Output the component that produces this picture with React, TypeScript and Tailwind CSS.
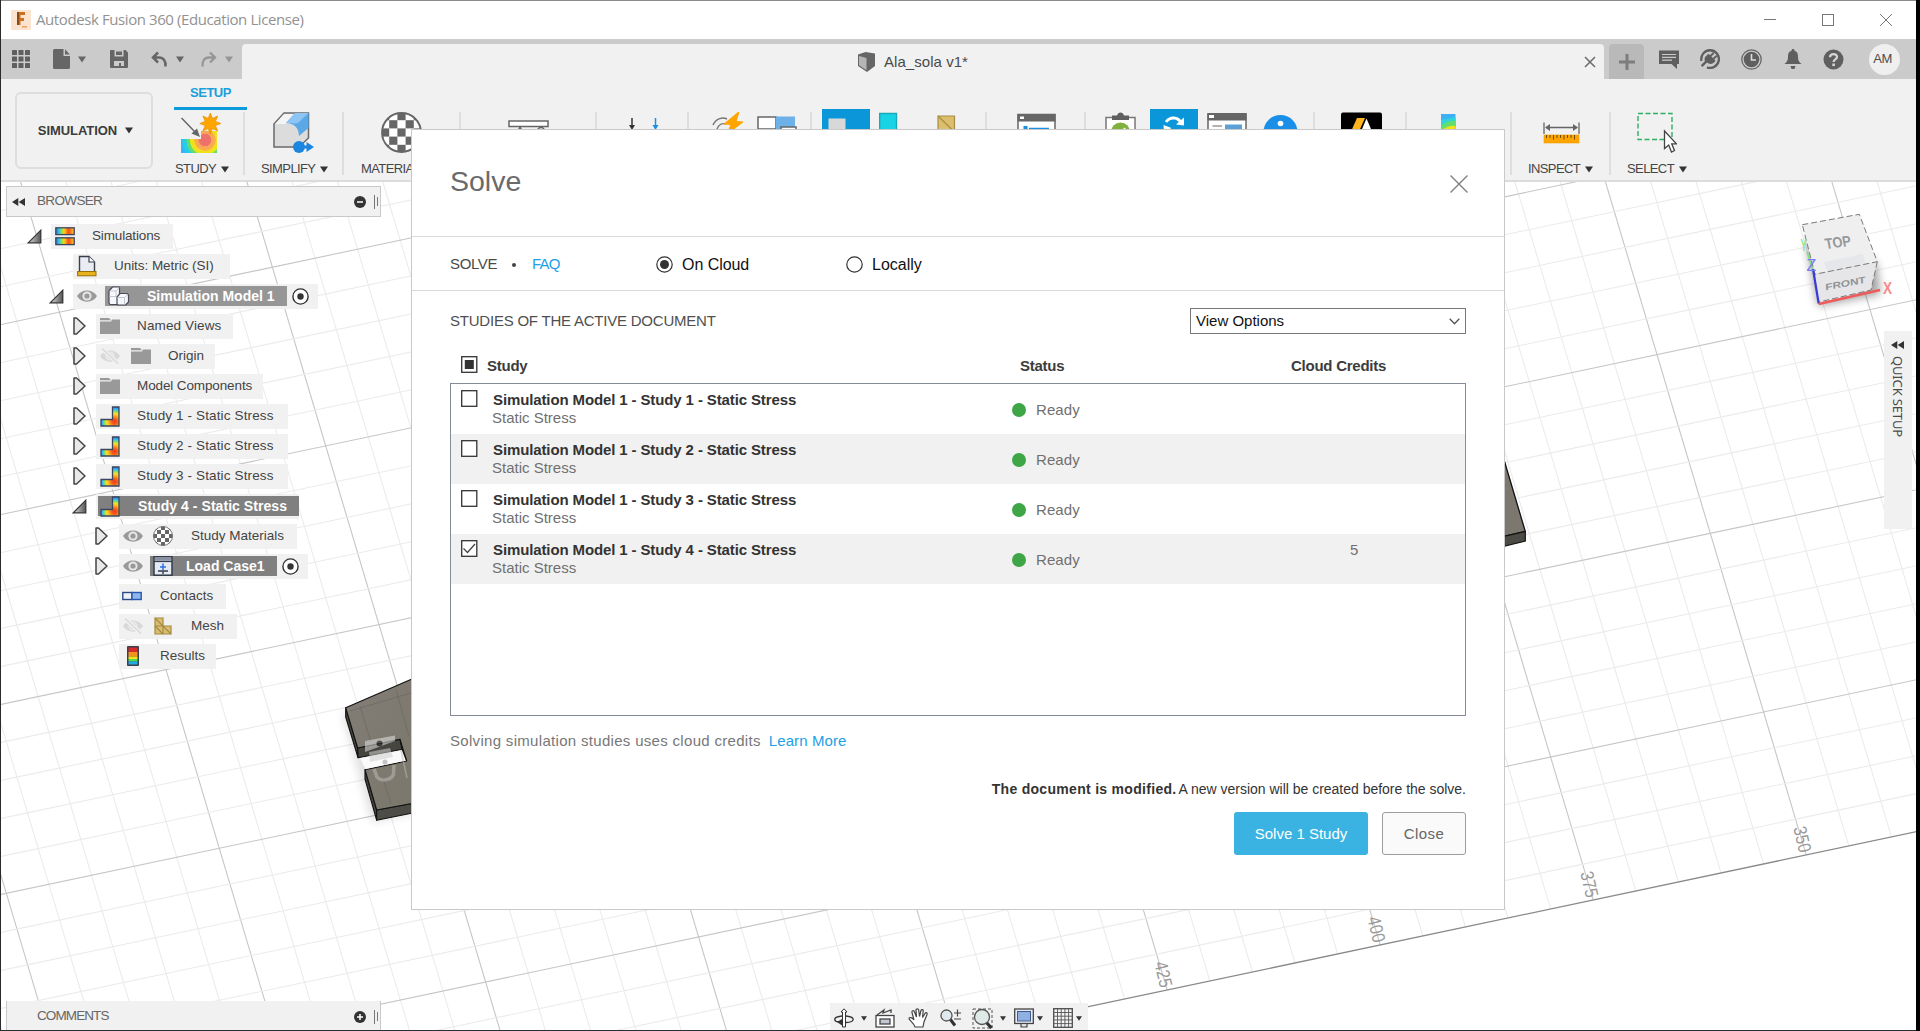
import React from "react";

/* ------------------------------------------------------------------ */
/* Viewport: ground grid, model, view cube                             */
/* ------------------------------------------------------------------ */

const ORIGIN = { x: 219.3, y: 848.3 };
const U = { x: 213, y: -45 };
const V = { x: 53.3, y: 178.7 };
const EDGE = 1.8;

const pt = (i: number, j: number) => ({
  x: ORIGIN.x + U.x * i + V.x * j,
  y: ORIGIN.y + U.y * i + V.y * j,
});

function GridLines() {
  const lines: React.ReactElement[] = [];
  for (let k = -20; k <= 65; k++) {
    const a = pt(k / 5, -7);
    const b = pt(k / 5, EDGE);
    lines.push(
      <line key={"u" + k} x1={a.x} y1={a.y} x2={b.x} y2={b.y} stroke={k % 5 === 0 ? "#c6c6c6" : "#ebebeb"} strokeWidth={1.1} />
    );
  }
  for (let k = -35; k < 9; k++) {
    const a = pt(-4, k / 5);
    const b = pt(13, k / 5);
    lines.push(
      <line key={"v" + k} x1={a.x} y1={a.y} x2={b.x} y2={b.y} stroke={k % 5 === 0 ? "#c6c6c6" : "#ebebeb"} strokeWidth={1.1} />
    );
  }
  const e1 = pt(-4, EDGE);
  const e2 = pt(13, EDGE);
  lines.push(<line key="edge" x1={e1.x} y1={e1.y} x2={e2.x} y2={e2.y} stroke="#8a8a8a" strokeWidth={1.3} />);
  return <g>{lines}</g>;
}

function Viewport() {
  const labels = [
    { t: "425", i: 4 },
    { t: "400", i: 5 },
    { t: "375", i: 6 },
    { t: "350", i: 7 },
  ];
  return (
    <svg className="absolute inset-0" width="1920" height="1031" viewBox="0 0 1920 1031">
      <defs>
        <filter id="soft" x="-50%" y="-50%" width="200%" height="200%">
          <feGaussianBlur stdDeviation="5" />
        </filter>
        <linearGradient id="slab" x1="0" y1="0" x2="1" y2="1">
          <stop offset="0" stopColor="#827d76" />
          <stop offset="1" stopColor="#7a776b" />
        </linearGradient>
      </defs>
      <GridLines />
      {labels.map((l) => {
        const p = pt(l.i, EDGE);
        return (
          <text
            key={l.t}
            transform={`translate(${p.x - 7} ${p.y - 1.5}) rotate(77) scale(0.85 1)`}
            textAnchor="end"
            fontFamily="Liberation Sans, sans-serif"
            fontSize="18.5"
            fill="#9a9a9a"
          >
            {l.t}
          </text>
        );
      })}

      {/* slab, left of the dialog */}
      <path d="M342 712 L356 764 L372 822 L420 812 L420 720 Z" fill="#000" opacity="0.12" filter="url(#soft)" />
      <g stroke="#111" strokeWidth="1.1" strokeLinejoin="round">
        <path d="M345.7 707.7 L345.7 717 L358 757.7 L357.7 748 Z" fill="#45443f" />
        <path d="M357.7 748 L400 739.3 L402.3 749.3 L358 757.7 Z" fill="#46453f" />
        <path d="M365 769.7 L365 779 L376.7 820.3 L376.7 810 Z" fill="#45443f" />
        <path d="M376.7 810 L420 802 L420 811.5 L376.7 820.3 Z" fill="#4d4c46" />
        <path
          d="M345.7 707.7 L420 675.5 L420 802 L376.7 810 L365 769.7 L406.7 761 L400 739.3 L357.7 748 Z"
          fill="url(#slab)"
        />
      </g>
      <path d="M396 690 L409 736 M360 706 L371 742 M383 778 L391 804 M350 711 L411 693" stroke="#726e67" strokeWidth="1" />
      <path d="M365.500 769 L360 758.300 L402 750.300 L406 760.500 Z" fill="#fafafa" />
      <path d="M400 739.3 L402.3 749.5 L406.7 761" fill="none" stroke="#111" strokeWidth="1.1" />
      <g opacity="0.55">
        <path d="M365 741 L395 735.5 L395 741 L365 752 Z" fill="#e2e2e2" />
        <path d="M369 752 L390 748 L393 757 L370 762 Z" fill="#cfcfcf" />
        <circle cx="379.5" cy="743.5" r="3" fill="#333" />
        <circle cx="385" cy="762" r="2.5" fill="#999" />
        <path d="M374 769 L377 777 C381 782 392 780 393.5 774 L394 765" fill="none" stroke="#b9b9b4" strokeWidth="3.5" />
        <path d="M401 750 L407 778" stroke="#b9b9b4" strokeWidth="1.5" />
      </g>

      {/* slab tip, right of the dialog */}
      <path d="M1495 431 L1505 463 L1525.3 531.500 L1495 538.500 Z" fill="#7c786f" stroke="#111" strokeWidth="1.3" />
      <path d="M1495 538.500 L1525.3 531.500 L1525.3 541 L1495 548.5 Z" fill="#4b4a45" stroke="#111" strokeWidth="1.2" />

      {/* view cube */}
      <path d="M1806 240 L1818 306 L1880 294 L1876 262 Z" fill="#000" opacity="0.38" filter="url(#soft)" />
      <path d="M1802.3 224.7 L1859.3 214.3 L1877.3 261.7 L1815 274.3 Z" fill="#efeff0" />
      <path d="M1815 274.3 L1877.3 261.7 L1871 290 L1818.7 303.3 Z" fill="#e6e6e8" />
      <path d="M1824 262 L1863 254 L1865 263 L1827 271 Z" fill="#e5e7eb" />
      <g fill="none" stroke="#7a7a7a" strokeWidth="1" strokeDasharray="6 3">
        <path d="M1802.3 224.7 L1859.3 214.3 L1877.3 261.7 L1815 274.3 Z" />
        <path d="M1877.3 261.7 L1871 290 L1818.7 302" />
      </g>
      <text transform="translate(1826 249) rotate(-7) skewX(4)" fontFamily="Liberation Sans, sans-serif" fontWeight="700" fontSize="15" textLength="26" lengthAdjust="spacingAndGlyphs" fill="#96989c">
        TOP
      </text>
      <text transform="translate(1825.500 290.500) rotate(-11) skewX(-8)" fontFamily="Liberation Sans, sans-serif" fontWeight="700" fontSize="9" textLength="41" lengthAdjust="spacingAndGlyphs" fill="#909297">
        FRONT
      </text>
      <path d="M1807 252 L1813 271" stroke="#7be57b" strokeWidth="1.5" />
      <text transform="translate(1800.5 251) scale(0.6 1)" fontFamily="Liberation Sans, sans-serif" fontSize="16" fill="#6fe96f">Y</text>
      <path d="M1813 269 L1818.7 303.5" stroke="#3a3ad8" strokeWidth="2.2" />
      <path d="M1818.7 304 L1880 290" stroke="#f05a5a" strokeWidth="2.4" />
      <text x="1806.500" y="271" fontFamily="Liberation Sans, sans-serif" fontSize="16" fill="#7b7bf0">Z</text>
      <text transform="translate(1883 293.5) scale(0.8 1)" fontFamily="Liberation Sans, sans-serif" fontSize="17" fontWeight="700" fill="#f58a8a">X</text>
    </svg>
  );
}

/* ------------------------------------------------------------------ */
/* Small shared glyphs                                                 */
/* ------------------------------------------------------------------ */

function Caret({ color = "#333" }: { color?: string }) {
  return (
    <svg width="8" height="7" viewBox="0 0 8 7" className="shrink-0">
      <path d="M0 0.5 H8 L4 6.5 Z" fill={color} />
    </svg>
  );
}

function Rewind() {
  return (
    <svg width="13" height="8" viewBox="0 0 13 8" className="shrink-0">
      <path d="M6.3 0 V8 L0 4 Z M13 0 V8 L6.7 4 Z" fill="#333" />
    </svg>
  );
}

function Checker({ size, n }: { size: number; n: string }) {
  const cells: React.ReactElement[] = [];
  for (let r = 0; r < 5; r++)
    for (let c = 0; c < 5; c++)
      if ((r + c) % 2 === 0) cells.push(<rect key={r * 5 + c} x={c * 8} y={r * 8} width="8" height="8" fill="#666" />);
  return (
    <svg width={size} height={size} viewBox="0 0 40 40" className="shrink-0">
      <clipPath id={n}>
        <circle cx="20" cy="20" r="19" />
      </clipPath>
      <g clipPath={`url(#${n})`}>
        <rect width="40" height="40" fill="#fff" />
        {cells}
      </g>
      <circle cx="20" cy="20" r="19" fill="none" stroke="#666" strokeWidth="1.8" />
    </svg>
  );
}

/* ------------------------------------------------------------------ */
/* Title bar                                                           */
/* ------------------------------------------------------------------ */

function TitleBar() {
  return (
    <div className="flex h-[38px] items-center bg-white pl-[10px]">
      <svg width="20" height="20" viewBox="0 0 20 20">
        <rect width="20" height="20" rx="1" fill="#fbe3cf" />
        <path d="M6 2 H14 V5 H9.5 V8 H13 V11 H9.5 V15 H6 Z" fill="#c9711f" />
        <path d="M6 2 H8 V15 H6 Z" fill="#8f4a12" />
        <rect x="11" y="16" width="5" height="1.5" fill="#e9a062" />
      </svg>
      <span className="ml-[5px] -mt-[2px] font-['Open_Sans'] text-[15px] tracking-[-0.410px] text-[#929292]">
        Autodesk Fusion 360 (Education License)
      </span>
      <div className="ml-auto flex items-center gap-[46px] pr-[24px] text-[#777]">
        <svg width="12" height="12" viewBox="0 0 12 12"><path d="M0 5.5 H12" stroke="currentColor" /></svg>
        <svg width="12" height="12" viewBox="0 0 12 12"><rect x=".5" y=".5" width="11" height="11" fill="none" stroke="currentColor" /></svg>
        <svg width="12" height="12" viewBox="0 0 12 12"><path d="M0 0 L12 12 M12 0 L0 12" stroke="currentColor" /></svg>
      </div>
    </div>
  );
}

/* ------------------------------------------------------------------ */
/* Quick access bar and document tab                                   */
/* ------------------------------------------------------------------ */

function TabBar() {
  return (
    <div className="flex h-[40px] bg-[#cbcbcb]">
      <div className="flex h-full w-[241px] items-center pl-[11px]">
        <svg width="18" height="18" viewBox="0 0 18 18" fill="#5f5f5f">
          {[0, 6.5, 13].map((y) => [0, 6.5, 13].map((x) => <rect key={x + "-" + y} x={x} y={y} width="5" height="5" rx=".6" />))}
        </svg>
        <svg className="ml-[23px]" width="17" height="20" viewBox="0 0 17 20" fill="#666">
          <path d="M1.5 0 H10.5 V7 H17 V18.5 A1.5 1.5 0 0 1 15.500 20 H1.500 A1.500 1.500 0 0 1 0 18.500 V1.500 A1.500 1.500 0 0 1 1.500 0 Z M12 0.300 L16.800 5.500 H12 Z" />
        </svg>
        <div className="ml-[8px]"><Caret color="#666" /></div>
        <svg className="ml-[24px]" width="18" height="18" viewBox="0 0 18 18">
          <path d="M1 0 H15.500 L18 2.500 V17 A1 1 0 0 1 17 18 H1 A1 1 0 0 1 0 17 V1 A1 1 0 0 1 1 0 Z" fill="#666" />
          <path d="M4.500 0 H13.500 V6.500 H4.500 Z M4 11 H14 V16 H11 V13 H9 V16 H4 Z" fill="#cbcbcb" />
          <path d="M6 1.500 H12 V5 H6 Z" fill="#666" />
        </svg>
        <svg className="ml-[23px]" width="17" height="17" viewBox="0 0 17 17" fill="none" stroke="#666" strokeWidth="2.500">
          <path d="M7 1.500 L2 6.500 L7 11.500 M2 6.500 H8 C12.500 6.500 15 10 14.500 15.500" />
        </svg>
        <div className="ml-[8px]"><Caret color="#666" /></div>
        <svg className="ml-[16px]" width="17" height="17" viewBox="0 0 17 17" fill="none" stroke="#969696" strokeWidth="2.300">
          <path d="M10 1.500 L15 6.500 L10 11.500 M15 6.500 H9 C4.500 6.500 2 10 2.500 15.500" />
        </svg>
        <div className="ml-[8px]"><Caret color="#969696" /></div>
      </div>
      <div className="mt-[5px] flex w-[1362px] items-center rounded-t-[4px] bg-[#f1f1f1]">
        <svg className="ml-[616px]" width="17" height="20" viewBox="0 0 17 20">
          <path d="M0 2.500 L7.500 0 L17 1.500 V14 L9 20 L0 14 Z" fill="#666" />
          <path d="M1 4 L8.500 6 V18.300 L1 13.300 Z" fill="#b5b5b5" />
        </svg>
        <span className="ml-[9px] mt-[2px] text-[15px] tracking-[0.05px] text-[#4a4a4a]">Ala_sola v1*</span>
        <svg className="ml-auto mr-[8px]" width="12" height="12" viewBox="0 0 12 12"><path d="M1 1 L11 11 M11 1 L1 11" stroke="#6b6b6b" strokeWidth="1.500" /></svg>
      </div>
      <div className="ml-[5px] mt-[5px] flex w-[35px] items-center justify-center rounded-t-[4px] bg-[#b9b9b9]">
        <svg width="16" height="16" viewBox="0 0 16 16"><path d="M8 0 V16 M0 8 H16" stroke="#7d7d7d" strokeWidth="3" /></svg>
      </div>
      <div className="flex items-center pl-[15px]">
        <svg width="20" height="19" viewBox="0 0 20 19">
          <path d="M0 0.500 H20 V14 H18 V19 L12.500 14 H0 Z" fill="#5f5f5f" />
          <path d="M3 4.500 H17 M3 7.300 H17 M3 10.100 H13" stroke="#cbcbcb" strokeWidth="1.200" />
        </svg>
        <svg className="ml-[21px]" width="20" height="20" viewBox="0 0 20 20">
          <path d="M1.500 12 A8.800 8.800 0 1 1 7 18.300" fill="none" stroke="#5f5f5f" strokeWidth="2.300" />
          <path d="M5.500 7.500 L8.500 4.800 L15.500 11.500 C14 15 9.500 16 7 13.500 L2.500 18 L0.800 16.300 L5 12 C4.200 10.500 4.500 8.500 5.500 7.500 Z" fill="#5f5f5f" />
          <path d="M10.500 7 L13.800 3.800 M13.500 9.800 L16.800 6.600" stroke="#5f5f5f" strokeWidth="1.900" />
        </svg>
        <svg className="ml-[21px]" width="21" height="21" viewBox="0 0 21 21">
          <circle cx="10.500" cy="10.500" r="9.700" fill="none" stroke="#666" strokeWidth="1.300" />
          <circle cx="10.500" cy="10.500" r="7.800" fill="#5f5f5f" />
          <path d="M10.500 5 V11 H15" fill="none" stroke="#ddd" strokeWidth="1.600" />
        </svg>
        <svg className="ml-[22px]" width="18" height="20" viewBox="0 0 18 20" fill="#5f5f5f">
          <path d="M9 0 C10 0 10.500 0.700 10.500 1.700 C13.500 2.500 14 5 14 8 C14 12 15.500 13 17.500 15 H0.500 C2.500 13 4 12 4 8 C4 5 4.500 2.500 7.500 1.700 C7.500 0.700 8 0 9 0 Z M6.500 17 H11.500 L10.500 20 H7.500 Z" />
        </svg>
        <svg className="ml-[21px]" width="21" height="21" viewBox="0 0 21 21">
          <circle cx="10.500" cy="10.500" r="10" fill="#5f5f5f" />
          <path d="M7 8.300 C7 4 14 4 14 8 C14 10.500 10.600 10.300 10.600 13" fill="none" stroke="#d5d5d5" strokeWidth="2.300" />
          <rect x="9.300" y="14.500" width="2.600" height="2.600" fill="#d5d5d5" />
        </svg>
        <div className="ml-[25px] flex h-[31px] w-[31px] items-center justify-center rounded-full bg-[#efefef] pr-[4px] text-[13px] tracking-[-0.600px] text-[#4d4d4d]">
          AM
        </div>
      </div>
    </div>
  );
}

/* ------------------------------------------------------------------ */
/* Ribbon                                                              */
/* ------------------------------------------------------------------ */

const starPoints = Array.from({ length: 16 }, (_, i) => {
  const r = i % 2 === 0 ? 10.5 : 5.5;
  const a = (i * Math.PI) / 8 - Math.PI / 2;
  return `${29.3 + r * Math.cos(a)},${11.5 + r * Math.sin(a)}`;
}).join(" ");

function StudyIcon() {
  return (
    <svg width="40" height="42" viewBox="0 0 40 42">
      <defs>
        <radialGradient id="heatStudy" gradientUnits="userSpaceOnUse" cx="24" cy="28" r="26">
          <stop offset="0" stopColor="#ec6f6f" />
          <stop offset="0.230" stopColor="#ee7468" />
          <stop offset="0.250" stopColor="#f9a35c" />
          <stop offset="0.400" stopColor="#fbb04a" />
          <stop offset="0.420" stopColor="#f5dd1c" />
          <stop offset="0.560" stopColor="#e6e81c" />
          <stop offset="0.590" stopColor="#6cdc6a" />
          <stop offset="0.700" stopColor="#5cdb7c" />
          <stop offset="0.730" stopColor="#22cfe6" />
          <stop offset="0.850" stopColor="#22cfe6" />
          <stop offset="0.880" stopColor="#3bb4f5" />
        </radialGradient>
      </defs>
      <path d="M0 27 H20 V19 H36 V41 H0 Z" fill="url(#heatStudy)" />
      <path d="M0.500 6 L15 21" stroke="#666" strokeWidth="1.500" />
      <path d="M19 25 L10.500 21.500 L16 16.500 Z" fill="#666" />
      <polygon points={starPoints} fill="#ffa500" stroke="#e58e00" strokeWidth="0.700" />
    </svg>
  );
}

function SimplifyIcon() {
  return (
    <svg width="42" height="42" viewBox="0 0 42 42">
      <path d="M1 12 L11 1 H35.500 V26 L26 35 H1 Z" fill="#dcdcdc" stroke="#6a6a6a" strokeWidth="1.500" />
      <path d="M2 12 L11 2 H22 L13 12 Z" fill="#f4f4f4" />
      <path d="M13 11 L22 1 H35.500 V16 L26 24 C26 16 21 11 13 11 Z" fill="#5aa9e6" />
      <path d="M13 11 L22 1 H35.500 L25 11 C22 12 18 11 13 11 Z" fill="#8cc4f3" />
      <circle cx="26" cy="35" r="6" fill="#1a86e0" />
      <path d="M30 35 H36" stroke="#1a86e0" strokeWidth="3" />
      <path d="M33.500 30 L41 35 L33.500 40 Z" fill="#1a86e0" />
    </svg>
  );
}

function InspectIcon() {
  return (
    <svg width="37" height="42" viewBox="0 0 37 42">
      <path d="M1 10.500 V22 M36 10.500 V22 M3 15.500 H34" stroke="#666" strokeWidth="1.300" />
      <path d="M2 15.500 L7 12 V19 Z M35 15.500 L30 12 V19 Z" fill="#666" />
      <rect x="1" y="23" width="35" height="8" fill="#ffa500" stroke="#f09a00" strokeWidth="0.600" />
      <path d="M3.500 23 V26 M7 23 V26 M10.500 23 V27.500 M14 23 V26 M17.500 23 V26 M21 23 V27.500 M24.500 23 V26 M28 23 V26 M31.500 23 V27.500" stroke="#6b4a10" strokeWidth="1" />
    </svg>
  );
}

function SelectIcon() {
  return (
    <svg width="40" height="42" viewBox="0 0 40 42">
      <rect x="1" y="1.500" width="34" height="26" fill="none" stroke="#2fae5f" strokeWidth="1.400" strokeDasharray="5 2.500" />
      <path d="M27.500 19 V36.500 L31.700 33 L34.500 40 L37.500 38.500 L34.700 31.800 H39.500 Z" fill="#fff" stroke="#444" strokeWidth="1.300" />
    </svg>
  );
}

function Group({ w, label, children, pad, lpad }: { w: string; label?: string; children: React.ReactNode; pad: string; lpad?: string }) {
  return (
    <div className={`flex h-[63px] shrink-0 flex-col border-r-2 border-[#dedede] ${w}`}>
      <div className={`flex h-[47px] shrink-0 items-start ${pad}`}>{children}</div>
      {label && (
        <div className={`flex h-[20px] shrink-0 items-center gap-[5px] text-[13px] leading-[20px] tracking-[-0.600px] text-[#454545] ${lpad}`}>
          {label}
          <Caret />
        </div>
      )}
    </div>
  );
}

function Ribbon() {
  return (
    <div className="flex h-[103px] border-b-2 border-[#dcdcdc] bg-[#f1f1f1] pl-[14px]">
      <button className="mt-[13px] flex h-[77px] w-[138px] shrink-0 items-center justify-center gap-[8px] rounded-[6px] border-2 border-[#dedede] pl-[3px] text-[13px] font-bold tracking-[-0.050px] text-[#3c3c3c]">
        SIMULATION
        <Caret />
      </button>
      <div className="ml-[21px] flex flex-col">
        <div className="flex h-[33px]">
          <div className="flex h-[31px] w-[73px] justify-center border-b-[3px] border-[#0e9bdc] pt-[5px] text-[13px] font-bold leading-[18px] tracking-[-0.500px] text-[#1a9fde]">
            SETUP
          </div>
        </div>
        <div className="flex h-[63px]">
          <Group w="w-[71px]" label="STUDY" pad="pl-[7px]" lpad="pl-[1px]"><StudyIcon /></Group>
          <Group w="w-[99px]" label="SIMPLIFY" pad="pl-[28px]" lpad="pl-[16px]"><SimplifyIcon /></Group>
          <Group w="w-[117px]" label="MATERIALS" pad="pl-[37px]" lpad="pl-[17px]"><Checker size={41} n="ballBig" /></Group>
          <Group w="w-[136px]" pad="pl-[47px]">
            <svg width="41" height="42" viewBox="0 0 41 42" fill="none" stroke="#666" strokeWidth="1.500">
              <rect x="1" y="9" width="39" height="5.500" fill="#fff" />
              <path d="M12 15 L6 26 H18 Z" /><circle cx="33" cy="19" r="3.500" />
            </svg>
          </Group>
          <Group w="w-[92px]" pad="pl-[30px]">
            <svg width="32" height="42" viewBox="0 0 32 42">
              <path d="M5 6 V13" stroke="#333" strokeWidth="1.500" /><path d="M2 13 H8 L5 18 Z" fill="#333" />
              <path d="M28.500 6 V13" stroke="#1a8fe8" strokeWidth="1.500" /><path d="M25.500 13 H31.500 L28.500 18 Z" fill="#1a8fe8" />
            </svg>
          </Group>
          <Group w="w-[123px]" pad="gap-[12px] pl-[23px]">
            <svg width="32" height="42" viewBox="0 0 32 42">
              <path d="M1 13 C4 6 11 5 15 7 M5 17 C7 12 11 11 14 12" fill="none" stroke="#777" strokeWidth="1.500" />
              <path d="M26 0.500 L12 12 L19 12.500 L15 22 L31 10 L24 9.500 L27 0 Z" fill="#ffa500" stroke="#ffa500" strokeWidth="1" />
            </svg>
            <svg width="41" height="42" viewBox="0 0 41 42">
              <rect x="2" y="5" width="18" height="12" fill="#fff" stroke="#666" strokeWidth="1.500" />
              <rect x="20" y="4.500" width="19" height="13" fill="#6db1e8" />
              <rect x="25" y="15" width="15" height="10" fill="#fff" stroke="#666" strokeWidth="1.500" />
            </svg>
          </Group>
          <Group w="w-[175px]" pad="pl-[10px]">
            <svg className="-mt-[3px]" width="48" height="48" viewBox="0 0 48 48">
              <rect width="48" height="48" fill="#0a96d9" />
              <rect x="6.500" y="9.500" width="17" height="30" fill="#d8d8d8" />
            </svg>
            <svg className="ml-[9px]" width="34" height="42" viewBox="0 0 34 42">
              <path d="M0.700 1.500 H17.500 V40 H0.700 Z" fill="#18d3e6" stroke="#1aa9b8" strokeWidth="1.400" />
              <path d="M18 17 H33 V40 H18 Z" fill="#c9eccb" />
            </svg>
            <svg className="ml-[24px]" width="32" height="42" viewBox="0 0 32 42">
              <path d="M1 4 H17.500 V20 H32 V40 H1 Z" fill="#dbbf6c" stroke="#a88d45" strokeWidth="1.200" />
              <path d="M1 4 L17.500 20" stroke="#a88d45" strokeWidth="1.200" />
            </svg>
          </Group>
          <Group w="w-[99px]" pad="pl-[30px]">
            <svg width="39" height="42" viewBox="0 0 39 42">
              <rect x="1" y="2.500" width="37" height="35" fill="#fff" stroke="#666" strokeWidth="1.500" />
              <rect x="0.500" y="2" width="38" height="7.500" fill="#666" /><rect x="3" y="4.500" width="4" height="2.500" fill="#fff" />
              <rect x="6.500" y="14" width="4" height="6" fill="#1a8fe8" /><path d="M12 16.500 H32" stroke="#1a8fe8" strokeWidth="1.500" />
            </svg>
          </Group>
          <Group w="w-[229px]" pad="pl-[19px]">
            <svg width="31" height="42" viewBox="0 0 31 42">
              <rect x="1" y="5.500" width="29" height="34" fill="#fff" stroke="#777" strokeWidth="1.500" />
              <path d="M7 3.500 H12 C13 -0.500 18 -0.500 19 3.500 H24 V8 H7 Z" fill="#5f5f5f" />
              <circle cx="15.500" cy="20" r="9.500" fill="#7fb13c" /><path d="M13 21 L15 23 L20 16" stroke="#fff" strokeWidth="1.800" fill="none" />
            </svg>
            <svg className="-mt-[3px] ml-[14px]" width="48" height="48" viewBox="0 0 48 48">
              <rect width="48" height="48" fill="#0a96d9" />
              <path d="M16 13 C20 7.500 28 7.500 31 14 M31 20 C30 27 20 30 16 24" fill="none" stroke="#fff" strokeWidth="2.800" />
              <path d="M26 15.500 L34 8.500 V16.500 Z M13.500 16 L21.500 19 L14 24 Z" fill="#fff" />
            </svg>
            <svg className="ml-[9px]" width="40" height="42" viewBox="0 0 40 42">
              <rect x="1" y="2" width="38" height="36" fill="#fff" stroke="#666" strokeWidth="1.500" />
              <rect x="0.500" y="1" width="39" height="7.500" fill="#666" /><rect x="2" y="3" width="5" height="3" fill="#fff" />
              <path d="M5.500 14 H15" stroke="#888" strokeWidth="1.300" /><rect x="18" y="12.500" width="17" height="12" fill="#5d9fd6" />
            </svg>
            <svg className="ml-[16px]" width="35" height="42" viewBox="0 0 35 42">
              <circle cx="17.500" cy="20" r="17" fill="#1a8fe8" /><circle cx="17.500" cy="11.500" r="2.800" fill="#fff" /><rect x="15.500" y="18" width="4" height="12" fill="#fff" />
            </svg>
          </Group>
          <Group w="w-[92px]" pad="pl-[26px]">
            <svg width="41" height="42" viewBox="0 0 41 42">
              <rect width="41" height="41" y="0.500" rx="2" fill="#000" />
              <path d="M16 6 H24 L16 24 H8 Z" fill="#ffb41c" /><path d="M25.500 6.500 L33 24 H18 Z" fill="#fff" />
            </svg>
          </Group>
          <Group w="w-[105px]" pad="pl-[34px]">
            <svg width="36" height="42" viewBox="0 0 36 42">
              <rect y="2" width="14.500" height="38" fill="#3fb0f5" />
              <path d="M0 8 L14.500 5 V40 H0 Z" fill="#2ed3dd" /><path d="M0 14 C4 10 10 8 14.500 9 V40 H0 Z" fill="#63dd6e" /><path d="M0 19 C4 15 10 13 14.500 14 V40 H0 Z" fill="#f2e21c" />
            </svg>
          </Group>
          <Group w="w-[99px]" label="INSPECT" pad="pl-[31px]" lpad="pl-[16px]"><InspectIcon /></Group>
          <div className="flex h-[63px] flex-col pl-[16px]">
            <div className="flex h-[47px] shrink-0 items-start pl-[10px]"><SelectIcon /></div>
            <div className="flex h-[20px] shrink-0 items-center gap-[5px] text-[13px] leading-[20px] tracking-[-0.600px] text-[#454545]">
              SELECT
              <Caret />
            </div>
          </div>
        </div>
      </div>
    </div>
  );
}

/* ------------------------------------------------------------------ */
/* Browser tree                                                        */
/* ------------------------------------------------------------------ */

function Eye({ off = false }: { off?: boolean }) {
  return (
    <svg width="20" height="16" viewBox="0 0 20 16" className="shrink-0">
      <path d="M0 8 C4 0.500 16 0.500 20 8 C16 15.500 4 15.500 0 8 Z" fill={off ? "#d9d9d9" : "#999"} />
      <circle cx="10" cy="8" r="4.600" fill={off ? "#e8e8e8" : "#e6e6e6"} />
      <circle cx="10" cy="8" r="2.600" fill={off ? "#d9d9d9" : "#999"} />
      {off && <path d="M2 1 L18 15" stroke="#f1f1f1" strokeWidth="4" />}
      {off && <path d="M2 0.500 L18 15.500" stroke="#d9d9d9" strokeWidth="1.500" />}
    </svg>
  );
}

function Folder() {
  return (
    <svg width="20" height="16" viewBox="0 0 20 16" className="shrink-0" fill="#999">
      <path d="M0 0 H9 L11 2.300 H0 Z M0 3.500 H11 L12 1.500 H20 V16 H0 Z" />
    </svg>
  );
}

function Spectrum({ id }: { id: string }) {
  return (
    <linearGradient id={id}>
      <stop offset="0" stopColor="#2f6fe0" /><stop offset="0.180" stopColor="#35c9dc" /><stop offset="0.320" stopColor="#8ee04a" />
      <stop offset="0.450" stopColor="#ffd21c" /><stop offset="0.700" stopColor="#f0501c" /><stop offset="0.850" stopColor="#ff8c1c" /><stop offset="1" stopColor="#ffd21c" />
    </linearGradient>
  );
}

function SimulationsIcon() {
  return (
    <svg width="20" height="20" viewBox="0 0 20 20" className="shrink-0">
      <defs><Spectrum id="spec" /></defs>
      <rect x="0.800" y="1.800" width="18.400" height="6.800" fill="url(#spec)" stroke="#3b4560" strokeWidth="1.300" />
      <rect x="0.800" y="11.800" width="18.400" height="6.800" fill="url(#spec)" stroke="#3b4560" strokeWidth="1.300" />
    </svg>
  );
}

function UnitsIcon() {
  return (
    <svg width="20" height="22" viewBox="0 0 20 22" className="shrink-0">
      <path d="M2.500 18 V1.500 H12 L17.500 7 V18" fill="#e9ecf3" stroke="#3b3f4c" strokeWidth="1.400" />
      <path d="M12 1.500 V7 H17.500" fill="#fff" stroke="#3b3f4c" strokeWidth="1.200" />
      <rect x="0.600" y="16.500" width="18.400" height="4.300" fill="#e8b21c" stroke="#9a6e0c" strokeWidth="1" />
    </svg>
  );
}

function BodiesIcon() {
  return (
    <svg width="22" height="20" viewBox="0 0 22 20" className="shrink-0" strokeLinejoin="round">
      <path d="M1 5 L4.500 1 H11.500 V9 L10 18.500 H2 L1 17 Z" fill="#f6f8fc" stroke="#4a4d56" strokeWidth="1.200" />
      <path d="M1.600 10.500 H8.500 M8 5 V10 M1.600 5 H8 L11 1.600" fill="none" stroke="#c3c8d3" strokeWidth="1" />
      <path d="M9 11 L12 7.500 H19 L20.500 9 V16 L17.500 19 H10 L9 18 Z" fill="#f6f8fc" stroke="#4a4d56" strokeWidth="1.200" />
      <path d="M9.600 11.500 H16.500 V18.400 M16.500 11.500 L20 8.500" fill="none" stroke="#c3c8d3" strokeWidth="1" />
    </svg>
  );
}

function StudyGlyph({ n }: { n: string }) {
  return (
    <svg width="20" height="21" viewBox="0 0 20 21" className="shrink-0">
      <defs>
        <radialGradient id={n} gradientUnits="userSpaceOnUse" cx="14.500" cy="15.500" r="14.500">
          <stop offset="0" stopColor="#f03a1c" /><stop offset="0.200" stopColor="#f6601c" /><stop offset="0.400" stopColor="#ffb21c" />
          <stop offset="0.560" stopColor="#f5e02c" /><stop offset="0.680" stopColor="#8fe05c" /><stop offset="0.800" stopColor="#3cc8e8" /><stop offset="1" stopColor="#2f78e8" />
        </radialGradient>
      </defs>
      <path d="M12.500 1 H19 V20 H1 V13.500 H12.500 Z" fill={`url(#${n})`} stroke="#3b4560" strokeWidth="1.300" />
    </svg>
  );
}

function LoadIcon() {
  return (
    <svg width="20" height="20" viewBox="0 0 20 20" className="shrink-0">
      <rect x="1" y="0.800" width="18" height="18.400" fill="#e4e9f2" stroke="#333a4a" strokeWidth="1.500" />
      <path d="M1 5.500 H19" stroke="#333a4a" strokeWidth="1.200" /><rect x="2" y="1.500" width="16" height="3.300" fill="#8b93a3" />
      <path d="M10 7.500 V14 M7 11 H13" stroke="#2f6fe0" strokeWidth="1.500" /><path d="M5 15 H15 M10 15 V18" stroke="#333a4a" strokeWidth="1.400" />
    </svg>
  );
}

function ContactsIcon() {
  return (
    <svg width="20" height="10" viewBox="0 0 20 10" className="-ml-px shrink-0">
      <rect x="0.800" y="1.500" width="9.200" height="7" fill="#eef1f7" stroke="#2c4a86" strokeWidth="1.400" />
      <rect x="10" y="1.500" width="9.200" height="7" fill="#8fb7ee" stroke="#2c55b0" strokeWidth="1.400" />
    </svg>
  );
}

function MeshIcon() {
  return (
    <svg width="18" height="18" viewBox="0 0 18 18" className="shrink-0">
      <path d="M1 1 H9 V9 H17 V17 H1 Z" fill="#d9be72" stroke="#a3893f" strokeWidth="1.200" />
      <path d="M1 1 L9 9 V17 M1 9 H9 L17 17 M1 9 L9 17" fill="none" stroke="#a3893f" strokeWidth="1.100" />
    </svg>
  );
}

function ResultsIcon() {
  return (
    <svg width="12" height="20" viewBox="0 0 12 20" className="shrink-0">
      <rect width="12" height="20" rx="1" fill="#3a3f4a" />
      <rect x="1.500" y="1.500" width="9" height="4.500" fill="#d42a2a" /><rect x="1.500" y="6" width="9" height="4.500" fill="#f0941c" />
      <rect x="1.500" y="10.500" width="9" height="2.500" fill="#f7e01c" /><rect x="1.500" y="13" width="9" height="2.500" fill="#4be04b" /><rect x="1.500" y="15.500" width="9" height="3" fill="#22a9e8" />
    </svg>
  );
}

function Twisty({ open }: { open: boolean }) {
  return open ? (
    <svg width="15" height="15" viewBox="0 0 15 15" className="shrink-0">
      <defs><linearGradient id="tw"><stop offset="0" stopColor="#ddd" /><stop offset="1" stopColor="#555" /></linearGradient></defs>
      <path d="M13.800 1.200 V13.800 H1.200 Z" fill="url(#tw)" stroke="#333" strokeWidth="1.200" />
    </svg>
  ) : (
    <svg width="13" height="18" viewBox="0 0 13 18" className="shrink-0">
      <path d="M1 1 L3.500 1 L12 9 L3.500 17 L1 17 Z" fill="#e9e9e9" stroke="#444" strokeWidth="1.500" strokeLinejoin="round" />
    </svg>
  );
}

function Radio() {
  return (
    <svg width="17" height="17" viewBox="0 0 17 17" className="shrink-0">
      <circle cx="8.500" cy="8.500" r="7.600" fill="#fff" stroke="#333" strokeWidth="1.400" /><circle cx="8.500" cy="8.500" r="3.200" fill="#333" />
    </svg>
  );
}

function Row({ indent, open, box, children }: { indent: string; open?: boolean; box: string; children: React.ReactNode }) {
  return (
    <div className={`flex h-[30px] items-center ${indent}`}>
      <div className="w-[24px] shrink-0">{open !== undefined && <Twisty open={open} />}</div>
      <div className={`flex h-[25px] shrink-0 items-center whitespace-nowrap bg-[#f1f1f1] pl-[4px] ${box}`}>{children}</div>
    </div>
  );
}

function BrowserPanel() {
  return (
    <div className="absolute left-[6px] top-[186px] w-[375px] text-[13.500px] text-[#444]">
      <div className="flex h-[31px] items-center border border-[#c9c9c9] bg-[#f1f1f1] pl-[5px]">
        <Rewind />
        <span className="ml-[12px] tracking-[-0.650px] text-[#666]">BROWSER</span>
        <svg className="ml-auto" width="12" height="12" viewBox="0 0 12 12"><circle cx="6" cy="6" r="6" fill="#333" /><path d="M3 6 H9" stroke="#fff" strokeWidth="1.500" /></svg>
        <div className="ml-[8px] mr-[2px] flex items-center gap-[2px]"><i className="h-[14px] w-px bg-[#777]" /><i className="h-[9px] w-px bg-[#777]" /></div>
      </div>
      <div className="mt-[4px]">
        <Row indent="pl-[21px]" open={true} box="w-[122px]"><SimulationsIcon /><span className="ml-[17px] pt-px tracking-[-0.150px]">Simulations</span></Row>
        <Row indent="pl-[43px]" box="w-[157px]"><UnitsIcon /><span className="ml-[17px] pt-px tracking-[-0.050px]">Units: Metric (SI)</span></Row>
        <Row indent="pl-[43px]" open={true} box="w-[245px]">
          <Eye />
          <span className="ml-[8px] flex h-[20px] w-[182px] items-center bg-[#969696] pl-[3px] text-[14px] font-bold text-white"><BodiesIcon /><span className="ml-[17px]">Simulation Model 1</span></span>
          <span className="ml-[5px]"><Radio /></span>
        </Row>
        <Row indent="pl-[67px]" open={false} box="-ml-px w-[137px]"><Folder /><span className="ml-[17px] pt-px tracking-[0.130px]">Named Views</span></Row>
        <Row indent="pl-[67px]" open={false} box="-ml-px w-[119px]"><Eye off /><span className="ml-[11px]"><Folder /></span><span className="ml-[17px] pt-px">Origin</span></Row>
        <Row indent="pl-[67px]" open={false} box="-ml-px w-[167px]"><Folder /><span className="ml-[17px] pt-px tracking-[-0.120px]">Model Components</span></Row>
        <Row indent="pl-[67px]" open={false} box="-ml-px w-[192px]"><StudyGlyph n="g1" /><span className="ml-[17px] pt-px tracking-[0.130px]">Study 1 - Static Stress</span></Row>
        <Row indent="pl-[67px]" open={false} box="-ml-px w-[192px]"><StudyGlyph n="g2" /><span className="ml-[17px] pt-px tracking-[0.130px]">Study 2 - Static Stress</span></Row>
        <Row indent="pl-[67px]" open={false} box="-ml-px w-[192px]"><StudyGlyph n="g3" /><span className="ml-[17px] pt-px tracking-[0.130px]">Study 3 - Static Stress</span></Row>
        <Row indent="pl-[66px]" open={true} box="w-[203px]">
          <span className="-ml-[2px] flex h-[20px] w-[201px] items-center bg-[#808080] pl-[2px] text-[14px] font-bold text-white"><StudyGlyph n="g4" /><span className="ml-[18px] tracking-[0.050px]">Study 4 - Static Stress</span></span>
        </Row>
        <Row indent="pl-[89px]" open={false} box="w-[178px]"><Eye /><span className="ml-[10px]"><Checker size={20} n="ballSmall" /></span><span className="ml-[18px] pt-px">Study Materials</span></Row>
        <Row indent="pl-[89px]" open={false} box="w-[189px]">
          <Eye />
          <span className="ml-[7px] flex h-[20px] w-[127px] items-center bg-[#808080] pl-[3px] text-[14px] font-bold text-white"><LoadIcon /><span className="ml-[13px]">Load Case1</span></span>
          <span className="ml-[5px]"><Radio /></span>
        </Row>
        <Row indent="pl-[89px]" box="w-[107px]"><ContactsIcon /><span className="ml-[18px] pt-px">Contacts</span></Row>
        <Row indent="pl-[89px]" box="w-[118px]"><Eye off /><span className="ml-[11px]"><MeshIcon /></span><span className="ml-[19px] pt-px">Mesh</span></Row>
        <Row indent="pl-[89px]" box="w-[97px]"><span className="ml-[4px]"><ResultsIcon /></span><span className="ml-[21px] pt-px">Results</span></Row>
      </div>
    </div>
  );
}

/* ------------------------------------------------------------------ */
/* Bottom bars                                                         */
/* ------------------------------------------------------------------ */

function CommentsBar() {
  return (
    <div className="absolute left-[6px] top-[1001px] flex h-[29px] w-[375px] items-center border-x border-[#c9c9c9] bg-[#f1f1f1] pt-[2px] text-[13.500px]">
      <span className="ml-[30px] tracking-[-0.900px] text-[#666]">COMMENTS</span>
      <svg className="ml-auto" width="12" height="12" viewBox="0 0 12 12"><circle cx="6" cy="6" r="6" fill="#333" /><path d="M3 6 H9 M6 3 V9" stroke="#fff" strokeWidth="1.500" /></svg>
      <div className="ml-[8px] mr-[2px] flex items-center gap-[2px]"><i className="h-[14px] w-px bg-[#777]" /><i className="h-[9px] w-px bg-[#777]" /></div>
    </div>
  );
}

function NavBar() {
  return (
    <div className="absolute left-[830px] top-[1003px] flex h-[27px] w-[258px] items-center bg-[#f1f1f1] pl-[4px] pt-[3px]">
      <svg width="20" height="20" viewBox="0 0 20 20" fill="none" stroke="#333" strokeWidth="1.300">
        <path d="M8.500 19 V4 H7 L10 0.800 L13 4 H11.500 V19 Z" fill="#fff" strokeWidth="1" />
        <path d="M8 8 C-2 9 -1 14 7 14 M12 8 C22 9 21 14 12 14.500" /><path d="M8 11 L3 14 L8 17.500 Z" fill="#333" stroke="none" />
      </svg>
      <span className="ml-[6px] scale-75"><Caret /></span>
      <svg className="ml-[7px]" width="20" height="20" viewBox="0 0 20 20" fill="none" stroke="#444" strokeWidth="1.300">
        <rect x="1" y="7.500" width="18" height="11.500" fill="#fff" /><rect x="5" y="11" width="10" height="5" fill="#c3c9d4" />
        <path d="M2 7 L9 2 L8 5 L16 2 V5" />
      </svg>
      <svg className="ml-[13px]" width="20" height="20" viewBox="0 0 20 20">
        <path d="M7 19 C6 15 1 12 1 10.500 C1 9 4 9 6 12 L4 4.500 C3.500 2.500 6 2 6.500 4 L8.500 9 L8 2 C8 0.500 10.500 0.500 10.700 2 L11.500 8.500 L13 2.500 C13.500 1 15.500 1.500 15.200 3 L14.500 9.500 L17 5.500 C18 4 19.500 5 19 6.500 L16 14 L15 19 Z" fill="#fff" stroke="#444" strokeWidth="1.200" />
      </svg>
      <svg className="ml-[12px]" width="21" height="20" viewBox="0 0 21 20">
        <path d="M10 11 L15 17.500" stroke="#333" strokeWidth="3" /><circle cx="6.500" cy="7.500" r="5.500" fill="#dfe9ee" stroke="#555" strokeWidth="1.300" />
        <path d="M14 5 H21 M17.500 1.500 V8.500 M14 11 H21" stroke="#444" strokeWidth="1.200" />
      </svg>
      <svg className="ml-[11px]" width="21" height="21" viewBox="0 0 21 21">
        <rect x="1" y="1" width="19" height="19" fill="none" stroke="#555" strokeWidth="1" strokeDasharray="3 2" />
        <path d="M14 14 L19.500 20" stroke="#333" strokeWidth="3.200" /><circle cx="10" cy="9" r="7.500" fill="#dfeae8" stroke="#555" strokeWidth="1.300" />
      </svg>
      <span className="ml-[6px] scale-75"><Caret /></span>
      <svg className="ml-[7px]" width="20" height="20" viewBox="0 0 20 20">
        <rect x="0.700" y="1" width="18.600" height="14.500" fill="#e8ebf0" stroke="#444" strokeWidth="1.300" /><rect x="3.500" y="3.500" width="13" height="9.500" fill="#8fb0e0" stroke="#3d5a90" />
        <path d="M7 16 V19 H13 V16" fill="#ddd" stroke="#444" strokeWidth="1.200" />
      </svg>
      <span className="ml-[2px] scale-75"><Caret /></span>
      <svg className="ml-[9px]" width="20" height="20" viewBox="0 0 20 20" fill="none" stroke="#555">
        <rect x="0.700" y="0.700" width="18.600" height="18.600" fill="#f5f5f7" strokeWidth="1.400" />
        <path d="M4.500 0 V20 M8.200 0 V20 M11.900 0 V20 M15.600 0 V20 M0 4.500 H20 M0 8.200 H20 M0 11.900 H20 M0 15.600 H20" strokeWidth="0.900" />
      </svg>
      <span className="ml-[2px] scale-75"><Caret /></span>
    </div>
  );
}

function QuickSetup() {
  return (
    <div className="absolute left-[1884px] top-[331px] flex h-[198px] w-[28px] flex-col items-center bg-[#f1f1f1] pr-[2px] pt-[10px]">
      <Rewind />
      <span className="ml-px mt-[7px] font-['Noto_Sans'] text-[13px] leading-[20px] tracking-[-0.150px] text-[#4a4a4a] [writing-mode:vertical-rl]">QUICK SETUP</span>
    </div>
  );
}

/* ------------------------------------------------------------------ */
/* Solve dialog                                                        */
/* ------------------------------------------------------------------ */

const studies = [
  { n: 1, checked: false, credits: "" },
  { n: 2, checked: false, credits: "" },
  { n: 3, checked: false, credits: "" },
  { n: 4, checked: true, credits: "5" },
];

function CheckBox({ state }: { state: "off" | "on" | "mixed" }) {
  return (
    <svg width="17" height="17" viewBox="0 0 17 17" className="shrink-0">
      <rect x="0.700" y="0.700" width="15.100" height="15.600" fill="#fff" stroke="#333" strokeWidth="1.300" />
      {state === "mixed" && <rect x="3.800" y="4" width="9" height="9" fill="#333" />}
      {state === "on" && <path d="M2.500 8.500 L6.500 12.500 L14 4" fill="none" stroke="#444" strokeWidth="1.300" />}
    </svg>
  );
}

function DialogRadio({ on }: { on: boolean }) {
  return (
    <svg width="17" height="17" viewBox="0 0 17 17" className="shrink-0">
      <circle cx="8.500" cy="8.500" r="7.700" fill="#fff" stroke="#333" strokeWidth="1.200" />
      {on && <circle cx="8.500" cy="8.500" r="4.500" fill="#333" />}
    </svg>
  );
}

function SolveDialog() {
  return (
    <div className="absolute left-[411px] top-[129px] flex h-[781px] w-[1094px] flex-col border border-[#c9c9c9] bg-white text-[15px] text-[#333]">
      <div className="flex h-[106px] items-start justify-between pl-[38px] pr-[36px]">
        <h1 className="mt-[35px] text-[28.500px] leading-[32px] text-[#6a6a6a]">Solve</h1>
        <svg className="mt-[45px]" width="18" height="18" viewBox="0 0 18 18"><path d="M0.500 0.500 L17.500 17.500 M17.500 0.500 L0.500 17.500" stroke="#808080" strokeWidth="1.400" /></svg>
      </div>
      <div className="flex h-[55px] items-center border-y border-[#d9d9d9] pl-[38px] pt-[2px]">
        <span className="w-[62px] tracking-[-0.350px] text-[#4a4a4a]">SOLVE</span>
        <span className="h-[4px] w-[4px] rounded-full bg-[#444]" />
        <span className="ml-[16px] w-[124px] tracking-[-0.850px] text-[#1ea0e6]">FAQ</span>
        <DialogRadio on />
        <span className="ml-[9px] w-[164px] text-[16px] tracking-[-0.050px] text-[#111]">On Cloud</span>
        <DialogRadio on={false} />
        <span className="ml-[9px] text-[16px] text-[#111]">Locally</span>
      </div>
      <div className="flex flex-col pl-[38px] pr-[38px]">
        <div className="flex h-[60px] items-center justify-between">
          <span className="tracking-[-0.220px] text-[#4f4f4f]">STUDIES OF THE ACTIVE DOCUMENT</span>
          <div className="flex h-[26px] w-[276px] items-center justify-between border border-[#777] pl-[5px] pr-[5px] text-[#111]">
            View Options
            <svg width="11" height="7" viewBox="0 0 11 7"><path d="M0.700 0.700 L5.500 5.700 L10.300 0.700" fill="none" stroke="#555" strokeWidth="1.300" /></svg>
          </div>
        </div>
        <div className="flex h-[32px] pl-[11px] font-bold tracking-[-0.250px] text-[#3c3c3c]">
          <span className="pt-[5px]"><CheckBox state="mixed" /></span>
          <span className="ml-[9px] w-[533px] pt-[4px]">Study</span>
          <span className="w-[271px] pt-[4px]">Status</span>
          <span className="pt-[4px]">Cloud Credits</span>
        </div>
        <div className="h-[333px] border border-[#858b96]">
          {studies.map((s) => (
            <div key={s.n} className={`flex h-[50px] ${s.n % 2 === 0 ? "bg-[#f1f1f1]" : "bg-white"}`}>
              <div className="ml-[10px] mt-[6px] w-[32px]"><CheckBox state={s.checked ? "on" : "off"} /></div>
              <div className="mt-[6px] w-[519px]">
                <div className="font-bold leading-[19px] tracking-[-0.120px] text-[#333]">Simulation Model 1 - Study {s.n} - Static Stress</div>
                <div className="-ml-px leading-[18px] text-[#707070]">Static Stress</div>
              </div>
              <div className="flex w-[338px] items-center gap-[10px] pt-px text-[#707070]">
                <span className="h-[14px] w-[14px] rounded-full bg-[#3fa648]" />
                <span className="pt-px tracking-[0.100px]">Ready</span>
              </div>
              <div className="mt-[5px] text-[#707070]">{s.credits}</div>
            </div>
          ))}
        </div>
        <div className="mt-[13px] flex gap-[8px] leading-[23px] text-[#777]">
          <span className="tracking-[0.310px]">Solving simulation studies uses cloud credits</span>
          <a className="tracking-[0.100px] text-[#1ea0e6]">Learn More</a>
        </div>
        <div className="mt-[27px] flex justify-end gap-[2px] text-[14px] leading-[20px] text-[#333]">
          <b className="tracking-[0.300px]">The document is modified.</b>
          <span className="tracking-[-0.010px]">A new version will be created before the solve.</span>
        </div>
        <div className="mt-[13px] flex justify-end gap-[14px]">
          <button className="h-[43px] w-[134px] rounded-[3px] bg-[#3ab3e2] pt-[2px] text-white">Solve 1 Study</button>
          <button className="h-[43px] w-[84px] rounded-[3px] border border-[#9c9c9c] bg-[#fafafa] pt-[2px] tracking-[0.400px] text-[#666]">Close</button>
        </div>
      </div>
    </div>
  );
}

export default function App() {
  return (
    <div className="relative flex h-[1031px] w-[1920px] overflow-hidden bg-white font-['Liberation_Sans',Arial,sans-serif]">
      <Viewport />
      <div className="relative w-px shrink-0 bg-[#2a2a2a]" />
      <div className="relative flex w-[1915px] flex-col">
        <div className="h-px bg-[#8a8a8a]" />
        <TitleBar />
        <TabBar />
        <Ribbon />
        <div className="mt-auto h-px bg-[#2a2f33]" />
      </div>
      <div className="relative w-[4px] bg-black" />
      <BrowserPanel />
      <CommentsBar />
      <NavBar />
      <QuickSetup />
      <SolveDialog />
    </div>
  );
}
